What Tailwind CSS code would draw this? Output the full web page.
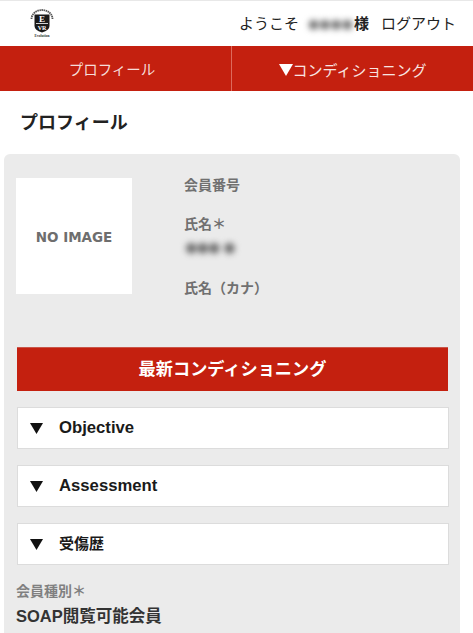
<!DOCTYPE html>
<html lang="ja">
<head>
<meta charset="UTF-8">
<meta name="viewport" content="width=device-width, initial-scale=1.0">
<title>プロフィール</title>
<script src="https://cdn.jsdelivr.net/npm/@tailwindcss/browser@4"></script>
</head>
<body class="h-[633px] overflow-hidden bg-white font-['Liberation_Sans','Noto_Sans_CJK_JP',sans-serif] text-[#222]">

<!-- Header -->
<header class="h-[46px] border-t border-[#e8e8e8] flex items-center justify-between pl-[30px] pr-[17px]">
  <svg width="24" height="28" viewBox="0 0 24 28" class="mt-[-1px]">
    <path d="M1.500 10 A10.500 9 0 0 1 22.500 10" fill="none" stroke="#555" stroke-width="1.800" stroke-dasharray="1.500 .6"/>
    <path d="M4.500 5.500 H19.500 V17 Q19.500 21 12 23.500 Q4.500 21 4.500 17 Z" fill="#1a1a1a"/>
    <text x="12" y="13" text-anchor="middle" font-family="Liberation Serif" font-weight="700" font-size="9" fill="#fff">E</text>
    <rect x="6" y="14" width="12" height=".8" fill="#fff"/>
    <text x="12" y="20.500" text-anchor="middle" font-family="Liberation Serif" font-weight="700" font-size="6" fill="#fff">VR</text>
    <text x="12" y="27.500" text-anchor="middle" font-family="Liberation Serif" font-weight="700" font-size="3.600" fill="#333">Evolution</text>
  </svg>
  <div class="flex items-center text-[15px] leading-none">
    <span>ようこそ</span>
    <span class="w-[47px] h-[15px] ml-[8px] text-[22px] leading-[15px] tracking-[-2px] text-[#666] blur-[3px] whitespace-nowrap">●●●●</span>
    <span class="font-bold">様</span>
    <span class="ml-[12px]">ログアウト</span>
  </div>
</header>

<!-- Nav -->
<nav class="h-[45px] bg-[#c4200f] flex">
  <a class="w-[232px] pt-[5px] pr-[7px] flex items-center justify-center border-r border-[#dd6a5c] text-[14.500px] text-[#f6dcd8]">プロフィール</a>
  <a class="flex-1 pt-[5px] flex items-center justify-center text-[15px] text-[#f8e4e1]">
    <svg width="14" height="12" viewBox="0 0 14 12" class="mt-[-2px]"><path d="M0 0 H14 L7 12 Z" fill="#fff"/></svg>
    コンディショニング
  </a>
</nav>

<h1 class="mt-[19px] ml-[20px] text-[18px] leading-[26px] font-bold">プロフィール</h1>

<!-- Profile panel -->
<main class="mt-[18px] ml-[4px] w-[456px] h-[480px] bg-[#ebebeb] rounded-t-[6px] px-[12px] pt-[24px]">
  <section class="flex h-[169px]">
    <div class="w-[116px] h-[116px] pt-[2px] bg-white flex items-center justify-center text-[13.500px] font-bold text-[#6e6e6e] font-['DejaVu_Sans',sans-serif]">NO IMAGE</div>
    <div class="ml-[52px] text-[14px] font-bold text-[#707070] leading-[16px]">
      <p class="mt-[-1px]">会員番号</p>
      <p class="mt-[23px]">氏名＊</p>
      <p class="mt-[5px] h-[20px] text-[24px] leading-[20px] tracking-[-3px] text-[#666] blur-[3px] whitespace-nowrap">●●● ●</p>
      <p class="mt-[23px]">氏名（カナ）</p>
    </div>
  </section>

  <button class="block ml-[1px] w-[431px] h-[44px] bg-[#c4200f] border-t border-[#c9564a] text-white text-[17.200px] font-bold">最新コンディショニング</button>

  <!-- Accordions -->
  <div class="mt-[16px] ml-[1px] w-[432px] flex flex-col gap-[16px]">
    <div class="h-[42px] bg-white border border-[#dcdcdc] flex items-center pl-[12px] text-[16.700px] font-bold text-[#1a1a1a]">
      <svg width="13" height="11" viewBox="0 0 13 11" class="mr-[16px]"><path d="M0 0 H13 L6.500 11 Z" fill="#111"/></svg>
      Objective
    </div>
    <div class="h-[42px] bg-white border border-[#dcdcdc] flex items-center pl-[12px] text-[16.700px] font-bold text-[#1a1a1a]">
      <svg width="13" height="11" viewBox="0 0 13 11" class="mr-[16px]"><path d="M0 0 H13 L6.500 11 Z" fill="#111"/></svg>
      Assessment
    </div>
    <div class="h-[42px] bg-white border border-[#dcdcdc] flex items-center pl-[12px] text-[15px] font-bold text-[#1a1a1a]">
      <svg width="13" height="11" viewBox="0 0 13 11" class="mr-[16px]"><path d="M0 0 H13 L6.500 11 Z" fill="#111"/></svg>
      受傷歴
    </div>
  </div>

  <p class="mt-[17px] text-[14px] leading-[18px] font-bold text-[#808080]">会員種別＊</p>
  <p class="mt-[6px] text-[16.500px] leading-[20px] font-bold text-[#333]">SOAP閲覧可能会員</p>
</main>

</body>
</html>
